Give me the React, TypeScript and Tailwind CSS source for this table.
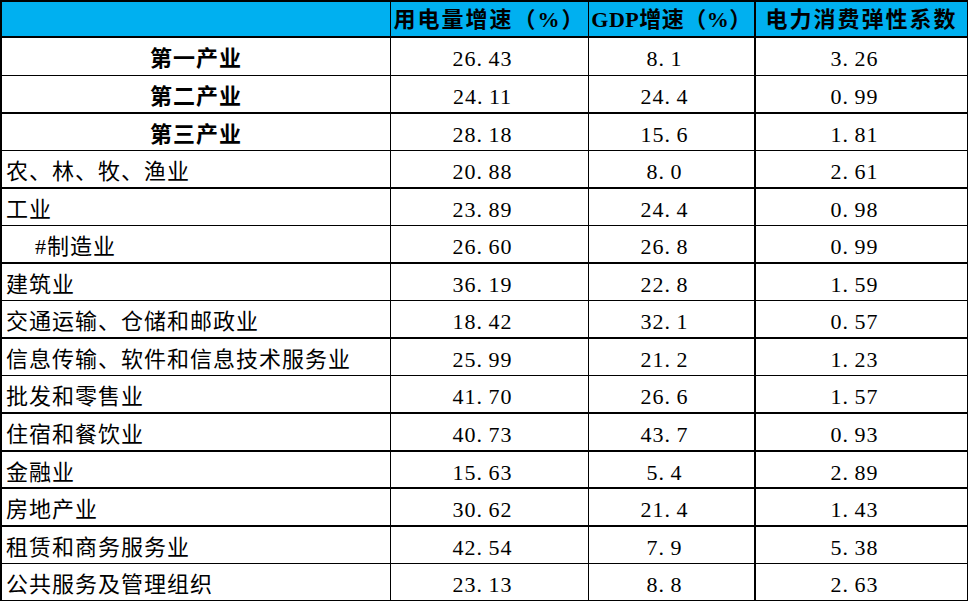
const rows = [
  { name: "第一产业", a: "26.43", b: "8.1", c: "3.26", h: "h-[38px] border-b", head: true },
  { name: "第二产业", a: "24.11", b: "24.4", c: "0.99", h: "h-[38px] border-b-2", head: true },
  { name: "第三产业", a: "28.18", b: "15.6", c: "1.81", h: "h-[37px] border-b", head: true },
  { name: "农、林、牧、渔业", a: "20.88", b: "8.0", c: "2.61", h: "h-[38px] border-b-2" },
  { name: "工业", a: "23.89", b: "24.4", c: "0.98", h: "h-[37px] border-b" },
  { name: "#制造业", a: "26.60", b: "26.8", c: "0.99", h: "h-[38px] border-b-2", indent: true },
  { name: "建筑业", a: "36.19", b: "22.8", c: "1.59", h: "h-[37px] border-b" },
  { name: "交通运输、仓储和邮政业", a: "18.42", b: "32.1", c: "0.57", h: "h-[38px] border-b-2" },
  { name: "信息传输、软件和信息技术服务业", a: "25.99", b: "21.2", c: "1.23", h: "h-[37px] border-b" },
  { name: "批发和零售业", a: "41.70", b: "26.6", c: "1.57", h: "h-[38px] border-b-2" },
  { name: "住宿和餐饮业", a: "40.73", b: "43.7", c: "0.93", h: "h-[38px] border-b-2" },
  { name: "金融业", a: "15.63", b: "5.4", c: "2.89", h: "h-[37px] border-b-2" },
  { name: "房地产业", a: "30.62", b: "21.4", c: "1.43", h: "h-[38px] border-b-2" },
  { name: "租赁和商务服务业", a: "42.54", b: "7.9", c: "5.38", h: "h-[37px] border-b" },
  { name: "公共服务及管理组织", a: "23.13", b: "8.8", c: "2.63", h: "h-[37px] border-b" },
];

function Num({ v }: { v: string }) {
  const [i, f] = v.split(".");
  return (
    <span>
      {i}
      <span className="inline-block w-[12px] text-left">.</span>
      {f}
    </span>
  );
}

const grid = "grid grid-cols-[389px_198px_167px_212px] border-black";
const num = "flex items-center justify-center pt-[4px] pr-[14px]";
const head = "flex items-center justify-center whitespace-nowrap pt-[1px]";

export default function App() {
  return (
    <div className="min-h-screen bg-white font-['Liberation_Serif','Noto_Sans_CJK_SC',serif] text-[22px] tracking-[1px] text-black">
      <div className="w-[968px] border-l-2 border-t-2 border-black">
        <div className={`${grid} h-[36px] border-b-2 bg-[#00B0F0] font-bold tracking-[2px]`}>
          <div className="border-r border-black" />
          <div className={`${head} border-r border-black`}>用电量增速（%）</div>
          <div className={`${head} border-r-2 border-black tracking-[0.5px]`}>GDP增速（%）</div>
          <div className={`${head} border-r border-black`}>电力消费弹性系数</div>
        </div>
        {rows.map((r) => (
          <div key={r.name} className={`${grid} ${r.h}`}>
            <div
              className={`flex items-center whitespace-nowrap border-r border-black pt-[4px] ${
                r.head ? "justify-center font-bold" : r.indent ? "pl-[33px]" : "pl-[4px]"
              }`}
            >
              {r.name}
            </div>
            <div className={`${num} border-r border-black`}>
              <Num v={r.a} />
            </div>
            <div className={`${num} border-r-2 border-black`}>
              <Num v={r.b} />
            </div>
            <div className={`${num} border-r border-black`}>
              <Num v={r.c} />
            </div>
          </div>
        ))}
      </div>
    </div>
  );
}
